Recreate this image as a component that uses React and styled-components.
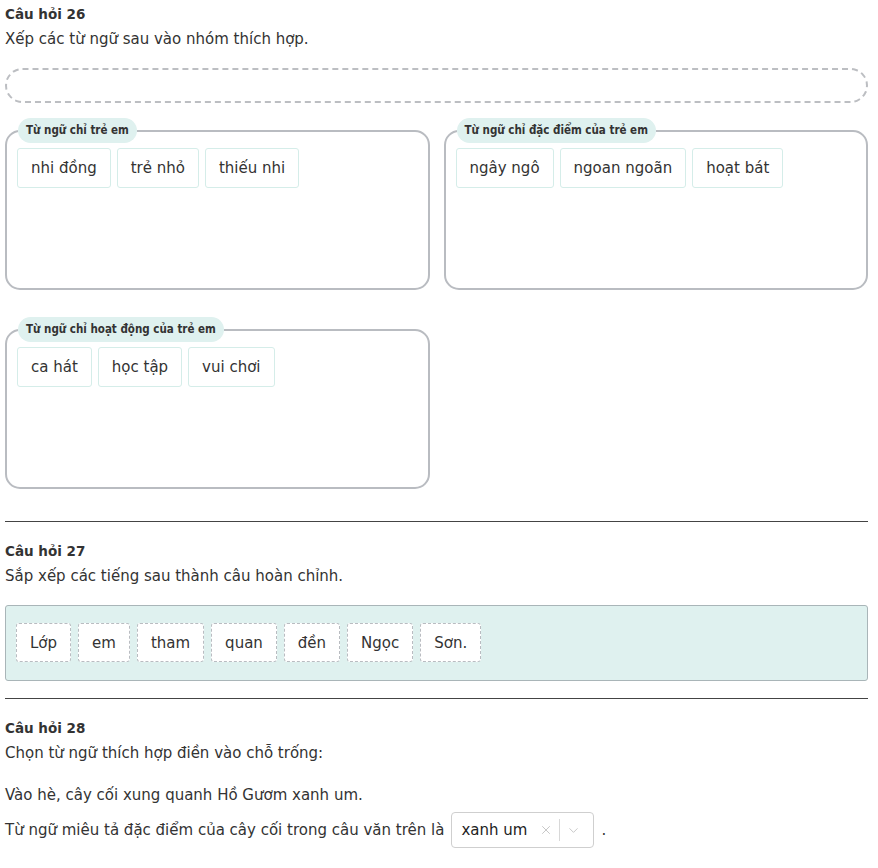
import React from "react";
import styled, { createGlobalStyle } from "styled-components";
import { X, ChevronDown } from "lucide-react";

const GlobalStyle = createGlobalStyle`
  body {
    margin: 0;
    padding: 0 10px 0 5px;
    background: #fff;
    color: #333;
    font-family: "DejaVu Sans", Verdana, sans-serif;
    font-size: 15px;
  }
`;

const groups = [
  { title: "Từ ngữ chỉ trẻ em", words: ["nhi đồng", "trẻ nhỏ", "thiếu nhi"] },
  { title: "Từ ngữ chỉ đặc điểm của trẻ em", words: ["ngây ngô", "ngoan ngoãn", "hoạt bát"] },
  { title: "Từ ngữ chỉ hoạt động của trẻ em", words: ["ca hát", "học tập", "vui chơi"] },
];

const tiles = ["Lớp", "em", "tham", "quan", "đền", "Ngọc", "Sơn."];

const App = () => {
  return (
    <Page>
      <GlobalStyle />
      <Question>
        <Title>Câu hỏi 26</Title>
        <Desc>Xếp các từ ngữ sau vào nhóm thích hợp.</Desc>
        <DropZone />
        <GroupGrid>
          {groups.map((g) => (
            <Group key={g.title}>
              <Legend>{g.title}</Legend>
              <ChipRow>
                {g.words.map((w) => (
                  <Chip key={w}>{w}</Chip>
                ))}
              </ChipRow>
            </Group>
          ))}
        </GroupGrid>
      </Question>
      <Rule $top={32} />
      <Question>
        <Title>Câu hỏi 27</Title>
        <Desc>Sắp xếp các tiếng sau thành câu hoàn chỉnh.</Desc>
        <TileBox>
          {tiles.map((t) => (
            <Tile key={t}>{t}</Tile>
          ))}
        </TileBox>
      </Question>
      <Rule $top={17} />
      <Question>
        <Title>Câu hỏi 28</Title>
        <Desc>Chọn từ ngữ thích hợp điền vào chỗ trống:</Desc>
        <Sentence>Vào hè, cây cối xung quanh Hồ Gươm xanh um.</Sentence>
        <AnswerLine>
          Từ ngữ miêu tả đặc điểm của cây cối trong câu văn trên là
          <Select>
            <SelectValue>xanh um</SelectValue>
            <SelectIcon>
              <X size={14} strokeWidth={1.6} />
            </SelectIcon>
            <Separator />
            <SelectIcon>
              <ChevronDown size={15} strokeWidth={1.5} />
            </SelectIcon>
          </Select>
          .
        </AnswerLine>
      </Question>
    </Page>
  );
};

const Page = styled.div`
  padding-top: 4px;
  padding-bottom: 20px;
`;

const Question = styled.div`
  display: flex;
  flex-direction: column;
`;

const Title = styled.div`
  font-weight: bold;
  font-size: 13.5px;
  line-height: 20px;
`;

const Desc = styled.div`
  margin-top: 5px;
  line-height: 20px;
`;

const DropZone = styled.div`
  margin-top: 19px;
  height: 31px;
  border: 2px dashed #bcbec2;
  border-radius: 18px;
`;

const GroupGrid = styled.div`
  margin-top: 15px;
  display: grid;
  grid-template-columns: 1fr 1fr;
  column-gap: 14px;
  row-gap: 27px;
`;

const Group = styled.fieldset`
  margin: 0;
  min-width: 0;
  padding: 0 10px 8px;
  border: 2px solid #b9bcc1;
  border-radius: 15px;
  min-height: 172px;
  box-sizing: border-box;
`;

const Legend = styled.legend`
  margin-left: 1px;
  padding: 0 8px;
  height: 25px;
  line-height: 25px;
  background: #dff1ef;
  border-radius: 13px;
  font-family: "DejaVu Sans Condensed", "DejaVu Sans", sans-serif;
  font-size: 11.5px;
  font-weight: bold;
  color: #333;
`;

const ChipRow = styled.div`
  margin-top: 5px;
  display: flex;
  flex-wrap: wrap;
  gap: 6px;
`;

const Chip = styled.div`
  height: 40px;
  box-sizing: border-box;
  padding: 0 13px;
  display: flex;
  align-items: center;
  border: 1px solid #d5ede9;
  border-radius: 3px;
  font-size: 15px;
  background: #fff;
`;

const Rule = styled.hr`
  margin: ${(p) => p.$top}px 0 19px;
  border: 0;
  border-top: 1px solid #444;
`;

const TileBox = styled.div`
  margin-top: 19px;
  padding: 17px 10px 18px;
  display: flex;
  flex-wrap: wrap;
  gap: 7px;
  background: #dff1ef;
  border: 1px solid #a9b5b8;
  border-radius: 3px;
`;

const Tile = styled.div`
  height: 39px;
  box-sizing: border-box;
  padding: 0 13px;
  display: flex;
  align-items: center;
  background: #fff;
  border: 1px dashed #b9bcc1;
  border-radius: 3px;
  font-size: 15px;
`;

const Sentence = styled.div`
  margin-top: 22px;
  line-height: 20px;
`;

const AnswerLine = styled.div`
  margin-top: 7px;
  display: flex;
  align-items: center;
  gap: 7px;
  line-height: 20px;
`;

const Select = styled.div`
  width: 143px;
  height: 36px;
  box-sizing: border-box;
  display: flex;
  align-items: center;
  padding: 0 6px 0 9px;
  border: 1px solid #cfcfcf;
  border-radius: 4px;
  background: #fff;
`;

const SelectValue = styled.span`
  flex: 1;
  font-size: 15px;
  color: #222;
`;

const SelectIcon = styled.span`
  display: flex;
  align-items: center;
  padding: 0 6px;
  color: #c4c4c4;
`;

const Separator = styled.span`
  width: 1px;
  height: 22px;
  background: #d8d8d8;
`;

export default App;
